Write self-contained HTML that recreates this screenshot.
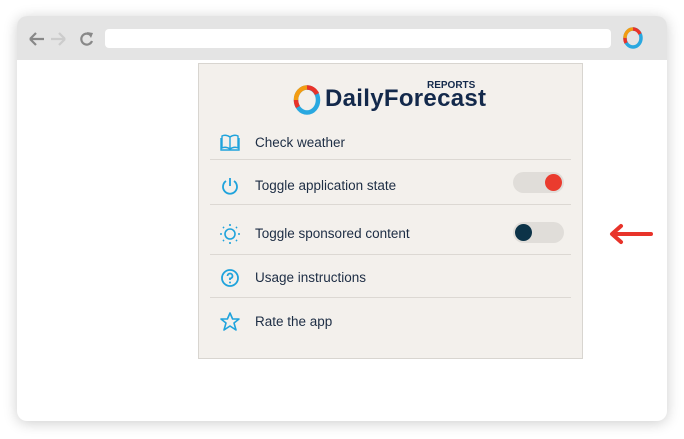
<!DOCTYPE html>
<html><head><meta charset="utf-8"><style>
*{margin:0;padding:0;box-sizing:border-box}
body{width:684px;height:439px;background:#fff;position:relative;overflow:hidden;font-family:"Liberation Sans",sans-serif}
.win{position:absolute;left:17px;top:16px;width:650px;height:405px;background:#fff;border-radius:10px;box-shadow:0 2px 14px rgba(0,0,0,.2);overflow:hidden}
.bar{position:absolute;left:0;top:0;width:650px;height:44px;background:#e4e4e4}
.addr{position:absolute;left:88px;top:13px;width:506px;height:19px;background:#fff;border-radius:4px}
.panel{position:absolute;left:198px;top:63px;width:385px;height:296px;background:#f3f0ec;border:1px solid #d8d5d0}
.row{position:absolute;left:11px;width:361px;color:#1d2d44;font-size:13.5px}
.sep{position:absolute;left:11px;width:361px;height:1px;background:#dcd8d3}
.row svg{position:absolute;left:10px;top:-2px}
.row span{position:absolute;left:45px;top:0}
.tog{position:absolute;left:314px;width:51px;height:21px;border-radius:11px;background:#e0ddd9}
.tog i{position:absolute;top:2px;width:17px;height:17px;border-radius:50%}
</style></head><body>
<div class="win">
<div class="bar">
<svg style="position:absolute;left:10px;top:14px" width="70" height="18" viewBox="0 0 70 18"><path d="M3 9H17M3 9L9 3M3 9L9 15" stroke="#888" stroke-width="2.2" fill="none"/><path d="M24 9H38M38 9L32 3M38 9L32 15" stroke="#ccc" stroke-width="2.2" fill="none"/><path d="M64 5.5A5.5 5.5 0 1 0 65 11" stroke="#888" stroke-width="2.2" fill="none"/><path d="M60 2L66 3L64 8Z" fill="#888"/></svg>
<div class="addr"></div>
<svg style="position:absolute;left:604px;top:10px" width="24" height="24" viewBox="0 0 24 24"><ellipse cx="12" cy="12" rx="8" ry="9" fill="none" stroke="#29a8e0" stroke-width="3.5"/><path d="M4 12A8 9 0 0 1 12 3" stroke="#f39c12" stroke-width="3.5" fill="none"/><path d="M12 3A8 9 0 0 1 19 8" stroke="#e8332a" stroke-width="3.5" fill="none"/><path d="M5 17A8 9 0 0 1 4 12" stroke="#e8332a" stroke-width="3.5" fill="none"/></svg>
</div>
</div>
<div class="panel">
<svg style="position:absolute;left:92px;top:20px" width="32" height="32" viewBox="0 0 32 32"><ellipse cx="16" cy="16" rx="11" ry="12.5" fill="none" stroke="#29a8e0" stroke-width="4.5"/><path d="M5 16A11 12.5 0 0 1 16 3.5" stroke="#f39c12" stroke-width="4.5" fill="none"/><path d="M16 3.5A11 12.5 0 0 1 26 10" stroke="#e8332a" stroke-width="4.5" fill="none"/><path d="M7 23A11 12.5 0 0 1 5 16" stroke="#e8332a" stroke-width="4.5" fill="none"/></svg>
<div style="position:absolute;left:228px;top:16px;font-size:10px;font-weight:bold;color:#13294b">REPORTS</div>
<div style="position:absolute;left:126px;top:21px;font-size:24px;font-weight:bold;color:#13294b;letter-spacing:0.3px">DailyForecast</div>
<div class="row" style="top:71px"><svg width="20" height="18" viewBox="0 0 20 18"><path d="M10 4C7 2 4 2 2 3V15C4 14 7 14 10 16C13 14 16 14 18 15V3C16 2 13 2 10 4ZM10 4V16M1 5V17H19V5" stroke="#1fa3dc" stroke-width="1.4" fill="none"/></svg><span>Check weather</span></div>
<div class="sep" style="top:95px"></div>
<div class="row" style="top:114px"><svg width="20" height="20" viewBox="0 0 20 20"><path d="M6 5A7 7 0 1 0 14 5M10 2V10" stroke="#1fa3dc" stroke-width="1.8" fill="none"/></svg><span>Toggle application state</span></div>
<div class="tog" style="top:108px"><i style="left:32px;background:#ea3b2e"></i></div>
<div class="sep" style="top:140px"></div>
<div class="row" style="top:162px"><svg width="20" height="20" viewBox="0 0 20 20"><circle cx="10" cy="10" r="5" stroke="#1fa3dc" stroke-width="1.6" fill="none"/><g stroke="#1fa3dc" stroke-width="1.6"><path d="M10 0V2M10 18V20M0 10H2M18 10H20M3 3L4 4M16 16L17 17M3 17L4 16M16 4L17 3"/></g></svg><span>Toggle sponsored content</span></div>
<div class="tog" style="top:158px"><i style="left:2px;background:#0c3348"></i></div>
<div class="sep" style="top:190px"></div>
<div class="row" style="top:206px"><svg width="20" height="20" viewBox="0 0 20 20"><circle cx="10" cy="10" r="8" stroke="#1fa3dc" stroke-width="1.8" fill="none"/><path d="M7.5 8A2.5 2.5 0 1 1 10 10.5V12" stroke="#1fa3dc" stroke-width="1.8" fill="none"/><circle cx="10" cy="14.5" r="1" fill="#1fa3dc"/></svg><span>Usage instructions</span></div>
<div class="sep" style="top:233px"></div>
<div class="row" style="top:250px"><svg width="20" height="20" viewBox="0 0 20 20"><path d="M10 1L12.6 7H19L14 11L16 18L10 14L4 18L6 11L1 7H7.4Z" stroke="#1fa3dc" stroke-width="1.6" fill="none" stroke-linejoin="round"/></svg><span>Rate the app</span></div>
</div>
<svg style="position:absolute;left:607px;top:222px" width="48" height="24" viewBox="0 0 48 24"><path d="M44 12H6M14 4L5 12L14 20" stroke="#e8332a" stroke-width="4" fill="none" stroke-linecap="round" stroke-linejoin="round"/></svg>
</body></html>
